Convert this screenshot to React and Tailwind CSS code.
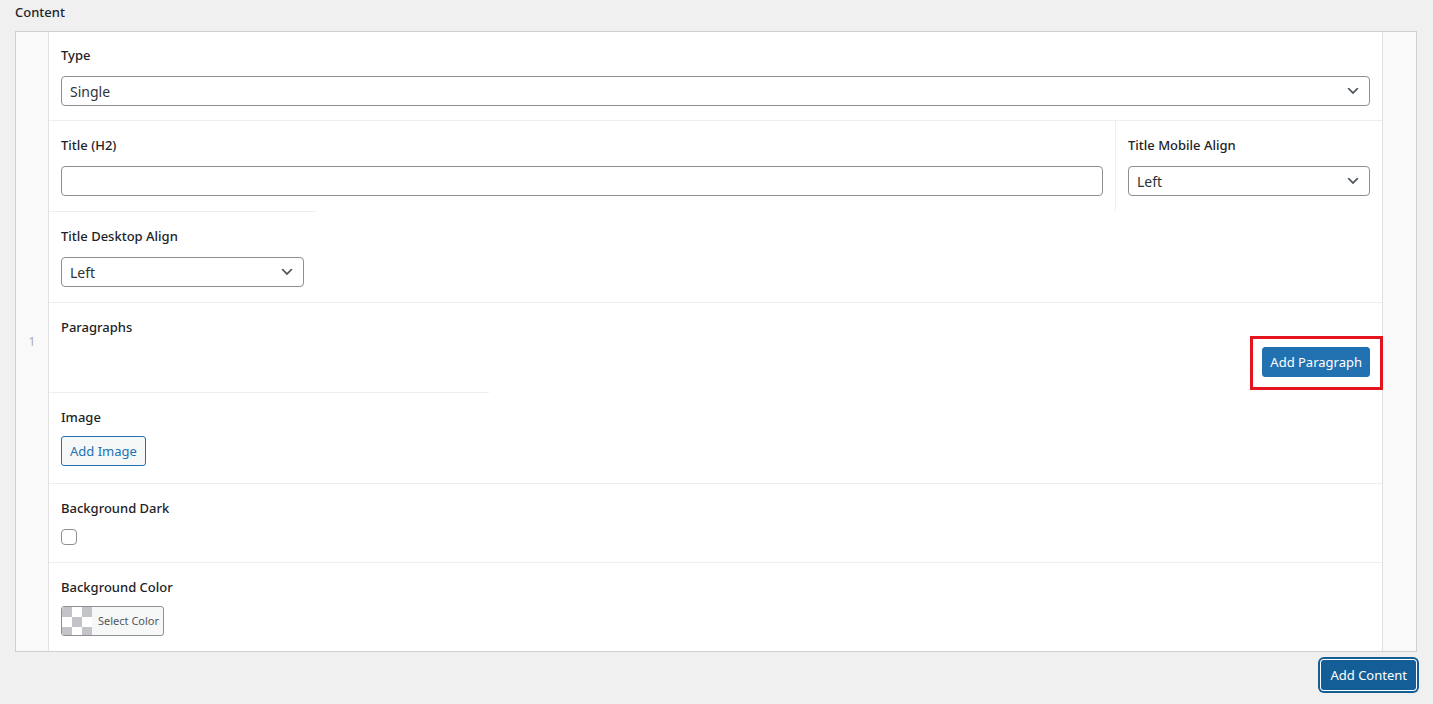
import React from "react";

const font = { fontFamily: '"Noto Sans", "Open Sans", sans-serif' };

function Chevron() {
  return (
    <svg width="16" height="16" viewBox="0 0 20 20" className="absolute right-[8px] top-1/2 -translate-y-1/2">
      <path d="M5 6l5 5 5-5 2 1-7 7-7-7 2-1z" fill="#50575e" />
    </svg>
  );
}

function Select({ value }) {
  return (
    <div className="relative h-[30px] w-full rounded-[4px] border border-[#8c8f94] bg-white">
      <span className="absolute left-[8px] top-1/2 -translate-y-1/2 text-[14px] text-[#2c3338]">{value}</span>
      <Chevron />
    </div>
  );
}

function Label({ children, small }) {
  return (
    <div
      className={
        "text-[13px] font-medium leading-[18px] text-[#1d2327] " + (small ? "mb-[10px]" : "mb-[12px]")
      }
    >
      {children}
    </div>
  );
}

function Checker() {
  const cells = [];
  for (let r = 0; r < 3; r++) {
    for (let c = 0; c < 3; c++) {
      if ((r + c) % 2 === 0) cells.push(<rect key={`${r}-${c}`} x={c * 10} y={r * 10} width="10" height="10" fill="#c3c4c7" />);
    }
  }
  return (
    <svg width="30" height="28" viewBox="0 0 30 28" className="block">
      <rect width="30" height="28" fill="#fff" />
      {cells}
    </svg>
  );
}

export default function App() {
  return (
    <div className="min-h-[704px] w-full bg-[#f0f0f1] pl-[15px] pr-[16px] pt-[3px]" style={font}>
      <div className="h-[18px] text-[13px] font-medium leading-[18px] text-[#1d2327]">Content</div>
      <div className="mt-[10px] flex border border-[#ccd0d4] bg-white">
        <div className="flex w-[33px] shrink-0 items-center justify-center border-r border-[#e1e1e1] bg-[#f9f9f9] text-[12px] text-[#aaa]">
          1
        </div>
        <div className="flex w-[1333px] flex-wrap content-start">
          {/* Type */}
          <div className="w-full px-[12px] pt-[14px] pb-[14px]">
            <Label>Type</Label>
            <Select value="Single" />
          </div>
          {/* Title */}
          <div className="w-[1066px] border-t border-[#eeeeee] px-[12px] pt-[15px] pb-[15px]">
            <Label>Title (H2)</Label>
            <div className="h-[30px] w-full rounded-[4px] border border-[#8c8f94] bg-white" />
          </div>
          <div className="w-[267px] border-t border-l border-[#eeeeee] px-[12px] pt-[15px] pb-[15px]">
            <Label>Title Mobile Align</Label>
            <Select value="Left" />
          </div>
          {/* Desktop align */}
          <div className="w-[267px] border-t border-[#eeeeee] px-[12px] pt-[15px] pb-[15px]">
            <Label>Title Desktop Align</Label>
            <Select value="Left" />
          </div>
          {/* Paragraphs */}
          <div className="w-full border-t border-[#eeeeee] px-[12px] pt-[15px] pb-[15px]">
            <Label small>Paragraphs</Label>
            <div className="flex justify-end pt-[1px]">
              <div className="relative">
                <button className="h-[30px] rounded-[3px] border border-[#2271b1] bg-[#2271b1] px-[7px] text-[13px] leading-[28px] text-white">
                  Add Paragraph
                </button>
                <div className="absolute left-[-12px] right-[-13px] top-[-11px] bottom-[-13px] border-[3px] border-[#e3141e]" />
              </div>
            </div>
          </div>
          {/* Image */}
          <div className="w-[440px] border-t border-[#eeeeee] px-[12px] pt-[15px] pb-[17px]">
            <Label small>Image</Label>
            <button className="h-[30px] rounded-[3px] border border-[#2271b1] bg-[#f6f7f7] px-[8px] text-[13px] leading-[28px] text-[#2271b1]">
              Add Image
            </button>
          </div>
          {/* Background Dark */}
          <div className="w-full border-t border-[#eeeeee] px-[12px] pt-[15px] pb-[17px]">
            <Label>Background Dark</Label>
            <div className="h-[16px] w-[16px] rounded-[4px] border border-[#8c8f94] bg-white" />
          </div>
          {/* Background Color */}
          <div className="w-full border-t border-[#eeeeee] px-[12px] pt-[15px] pb-[15px]">
            <Label small>Background Color</Label>
            <div className="flex h-[30px] w-[103px] items-center overflow-hidden rounded-[3px] border border-[#8c8f94] bg-[#f6f7f7]">
              <Checker />
              <span className="pl-[6px] text-[11px] text-[#50575e]">Select Color</span>
            </div>
          </div>
        </div>
        <div className="w-[34px] shrink-0 border-l border-[#e1e1e1] bg-[#f9f9f9]" />
      </div>
      <div className="mt-[8px] flex justify-end">
        <button className="mr-[1px] h-[30px] rounded-[3px] bg-[#135e96] px-[9px] text-[13px] leading-[30px] text-white shadow-[0_0_0_1px_#fff,0_0_0_3px_#135e96]">
          Add Content
        </button>
      </div>
    </div>
  );
}
